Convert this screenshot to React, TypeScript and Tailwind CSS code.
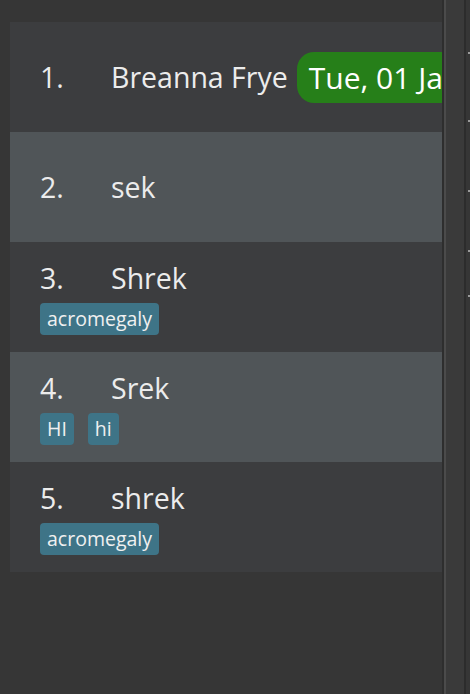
import React from 'react';

interface Person {
  name: string;
  tags: string[];
  date?: string;
}

const people: Person[] = [
  { name: 'Breanna Frye', tags: [], date: 'Tue, 01 Jan 2030' },
  { name: 'sek', tags: [] },
  { name: 'Shrek', tags: ['acromegaly'] },
  { name: 'Srek', tags: ['HI', 'hi'] },
  { name: 'shrek', tags: ['acromegaly'] },
];

const font = { fontFamily: '"Open Sans", "Noto Sans", sans-serif' };

const Row: React.FC<{ index: number; person: Person }> = ({ index, person }) => {
  const light = index % 2 === 1;
  const hasTags = person.tags.length > 0;
  return (
    <div
      className={`h-[110px] overflow-hidden whitespace-nowrap pl-[30px] flex flex-col ${
        hasTags ? 'pt-[16px]' : 'justify-center'
      } ${light ? 'bg-[#505558]' : 'bg-[#3c3d3f]'}`}
    >
      <div className="flex items-center h-[40px] text-[28.5px] text-[#ececec]">
        <span className="w-[71px] shrink-0">{index + 1}.</span>
        <span>{person.name}</span>
        {person.date && (
          <span className="ml-[9px] shrink-0 h-[51px] flex items-center bg-[#267f19] rounded-[17px] pl-[12px] pr-4 text-[30px] text-white">
            {person.date}
          </span>
        )}
      </div>
      {hasTags && (
        <div className="flex gap-[14px] mt-[5px]">
          {person.tags.map((t) => (
            <span
              key={t}
              className="h-[32px] flex items-center px-[7px] rounded-[4px] bg-[#3e7487] text-[19.5px] text-[#f0f0f0]"
            >
              {t}
            </span>
          ))}
        </div>
      )}
    </div>
  );
};

export default function App() {
  const marks = [52, 120, 190, 250, 295];
  return (
    <div className="w-[470px] h-[694px] bg-[#363636] flex overflow-hidden" style={font}>
      <div className="w-[442px] shrink-0 pt-[22px] pl-[10px]">
        {people.map((p, i) => (
          <Row key={i} index={i} person={p} />
        ))}
      </div>
      <div className="w-[2px] bg-[#2e2e2e]" />
      <div className="w-[2px] bg-[#4b4b4b]" />
      <div className="w-[18px] bg-[#3a3a3a]" />
      <div className="w-[2px] bg-[#2c2c2c]" />
      <div className="relative flex-1">
        {marks.map((y) => (
          <span key={y} className="absolute left-[2px] w-[2px] h-[2px] bg-[#9a9a9a]" style={{ top: y }} />
        ))}
      </div>
    </div>
  );
}
